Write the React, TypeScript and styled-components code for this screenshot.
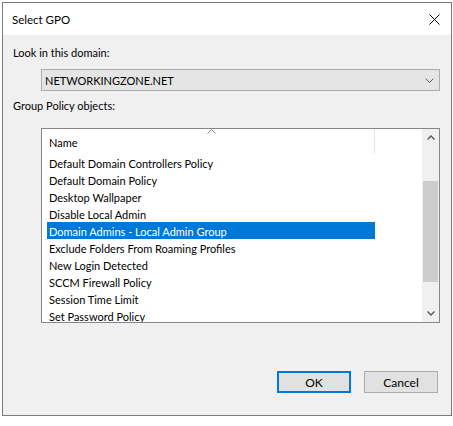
import React from "react";
import styled, { createGlobalStyle } from "styled-components";

const GlobalStyle = createGlobalStyle`
  html, body {
    margin: 0;
    padding: 0;
    background: #ffffff;
  }
  body {
    font-family: "Segoe UI", Lato, "Noto Sans", sans-serif;
    font-size: 11px;
    color: #000000;
  }
`;

const Window = styled.div`
  box-sizing: border-box;
  margin: 2px;
  width: 450px;
  height: 414px;
  border: 1px solid #7a7a7a;
  display: flex;
  flex-direction: column;
  background: #f0f0f0;
`;

const TitleBar = styled.div`
  height: 32px;
  background: #ffffff;
  display: flex;
  align-items: center;
  justify-content: space-between;
  padding: 0 11px 0 9px;
  font-size: 11.5px;
`;

const Body = styled.div`
  flex: 1;
  display: flex;
  flex-direction: column;
  padding: 9px 13px 0 10px;
`;

const Label = styled.div<{ $top: number }>`
  margin-top: ${(p) => p.$top}px;
  height: 16px;
  line-height: 17px;
`;

const Combo = styled.div`
  box-sizing: border-box;
  margin: 9px 0 0 28px;
  width: 399px;
  height: 22px;
  border: 1px solid #adadad;
  background: #e5e5e5;
  display: flex;
  align-items: center;
  justify-content: space-between;
  padding: 1px 5px 0 3px;
`;

const ListBox = styled.div`
  box-sizing: border-box;
  margin: 15px 0 0 28px;
  width: 399px;
  height: 195px;
  border: 1px solid #828790;
  background: #ffffff;
  display: flex;
  overflow: hidden;
`;

const ListContent = styled.div`
  flex: 1;
  display: flex;
  flex-direction: column;
  padding-left: 5px;
  overflow: hidden;
`;

const Header = styled.div`
  position: relative;
  flex: none;
  width: 328px;
  height: 25px;
  display: flex;
  align-items: center;
  padding: 1px 0 0 2px;
  box-sizing: border-box;
  border-right: 1px solid #e5e5e5;
`;

const SortArrow = styled.svg`
  position: absolute;
  left: 160px;
  top: 0;
`;

const Row = styled.div<{ $selected?: boolean }>`
  flex: none;
  width: 328px;
  height: 17px;
  line-height: 19px;
  padding-left: 2px;
  box-sizing: border-box;
  white-space: nowrap;
  background: ${(p) => (p.$selected ? "#0078d7" : "transparent")};
  color: ${(p) => (p.$selected ? "#ffffff" : "#000000")};
`;

const ScrollBar = styled.div`
  flex: none;
  width: 17px;
  background: #f0f0f0;
  display: flex;
  flex-direction: column;
`;

const ScrollButton = styled.div`
  height: 17px;
  display: flex;
  align-items: center;
  justify-content: center;
`;

const Track = styled.div`
  flex: 1;
  display: flex;
  flex-direction: column;
  padding: 35px 1px 23px;
`;

const Thumb = styled.div`
  height: 101px;
  background: #cdcdcd;
`;

const ButtonRow = styled.div`
  margin-top: 48px;
  display: flex;
  justify-content: flex-end;
  gap: 13px;
`;

const Button = styled.button<{ $default?: boolean }>`
  box-sizing: border-box;
  width: 74px;
  height: 22px;
  font: inherit;
  font-size: 12px;
  color: #000000;
  background: #e1e1e1;
  border: ${(p) => (p.$default ? "2px solid #0078d7" : "1px solid #adadad")};
  padding: 1px 0 0;
`;

const items = [
  "Default Domain Controllers Policy",
  "Default Domain Policy",
  "Desktop Wallpaper",
  "Disable Local Admin",
  "Domain Admins - Local Admin Group",
  "Exclude Folders From Roaming Profiles",
  "New Login Detected",
  "SCCM Firewall Policy",
  "Session Time Limit",
  "Set Password Policy",
];

export default function App() {
  return (
    <>
      <GlobalStyle />
      <Window>
        <TitleBar>
          <span>Select GPO</span>
          <svg width="11" height="11" viewBox="0 0 11 11">
            <path d="M0.5 0.5 L10.5 10.5 M10.5 0.5 L0.5 10.5" stroke="#000" strokeWidth="1" />
          </svg>
        </TitleBar>
        <Body>
          <Label $top={0}>Look in this domain:</Label>
          <Combo>
            <span>NETWORKINGZONE.NET</span>
            <svg width="9" height="5" viewBox="0 0 9 5">
              <path d="M0.5 0.5 L4.5 4.5 L8.5 0.5" stroke="#606060" fill="none" strokeWidth="1" />
            </svg>
          </Combo>
          <Label $top={6}>Group Policy objects:</Label>
          <ListBox>
            <ListContent>
              <Header>
                Name
                <SortArrow width="9" height="5" viewBox="0 0 9 5">
                  <path d="M0.5 4.5 L4.5 0.5 L8.5 4.5" stroke="#8a8a8a" fill="none" strokeWidth="1" />
                </SortArrow>
              </Header>
              {items.map((item) => (
                <Row key={item} $selected={item === "Domain Admins - Local Admin Group"}>
                  {item}
                </Row>
              ))}
            </ListContent>
            <ScrollBar>
              <ScrollButton>
                <svg width="8" height="5" viewBox="0 0 8 5">
                  <path d="M0.5 4.5 L4 1 L7.5 4.5" stroke="#606060" fill="none" strokeWidth="1.5" />
                </svg>
              </ScrollButton>
              <Track>
                <Thumb />
              </Track>
              <ScrollButton>
                <svg width="8" height="5" viewBox="0 0 8 5">
                  <path d="M0.5 0.5 L4 4 L7.5 0.5" stroke="#606060" fill="none" strokeWidth="1.5" />
                </svg>
              </ScrollButton>
            </ScrollBar>
          </ListBox>
          <ButtonRow>
            <Button $default>OK</Button>
            <Button>Cancel</Button>
          </ButtonRow>
        </Body>
      </Window>
    </>
  );
}
